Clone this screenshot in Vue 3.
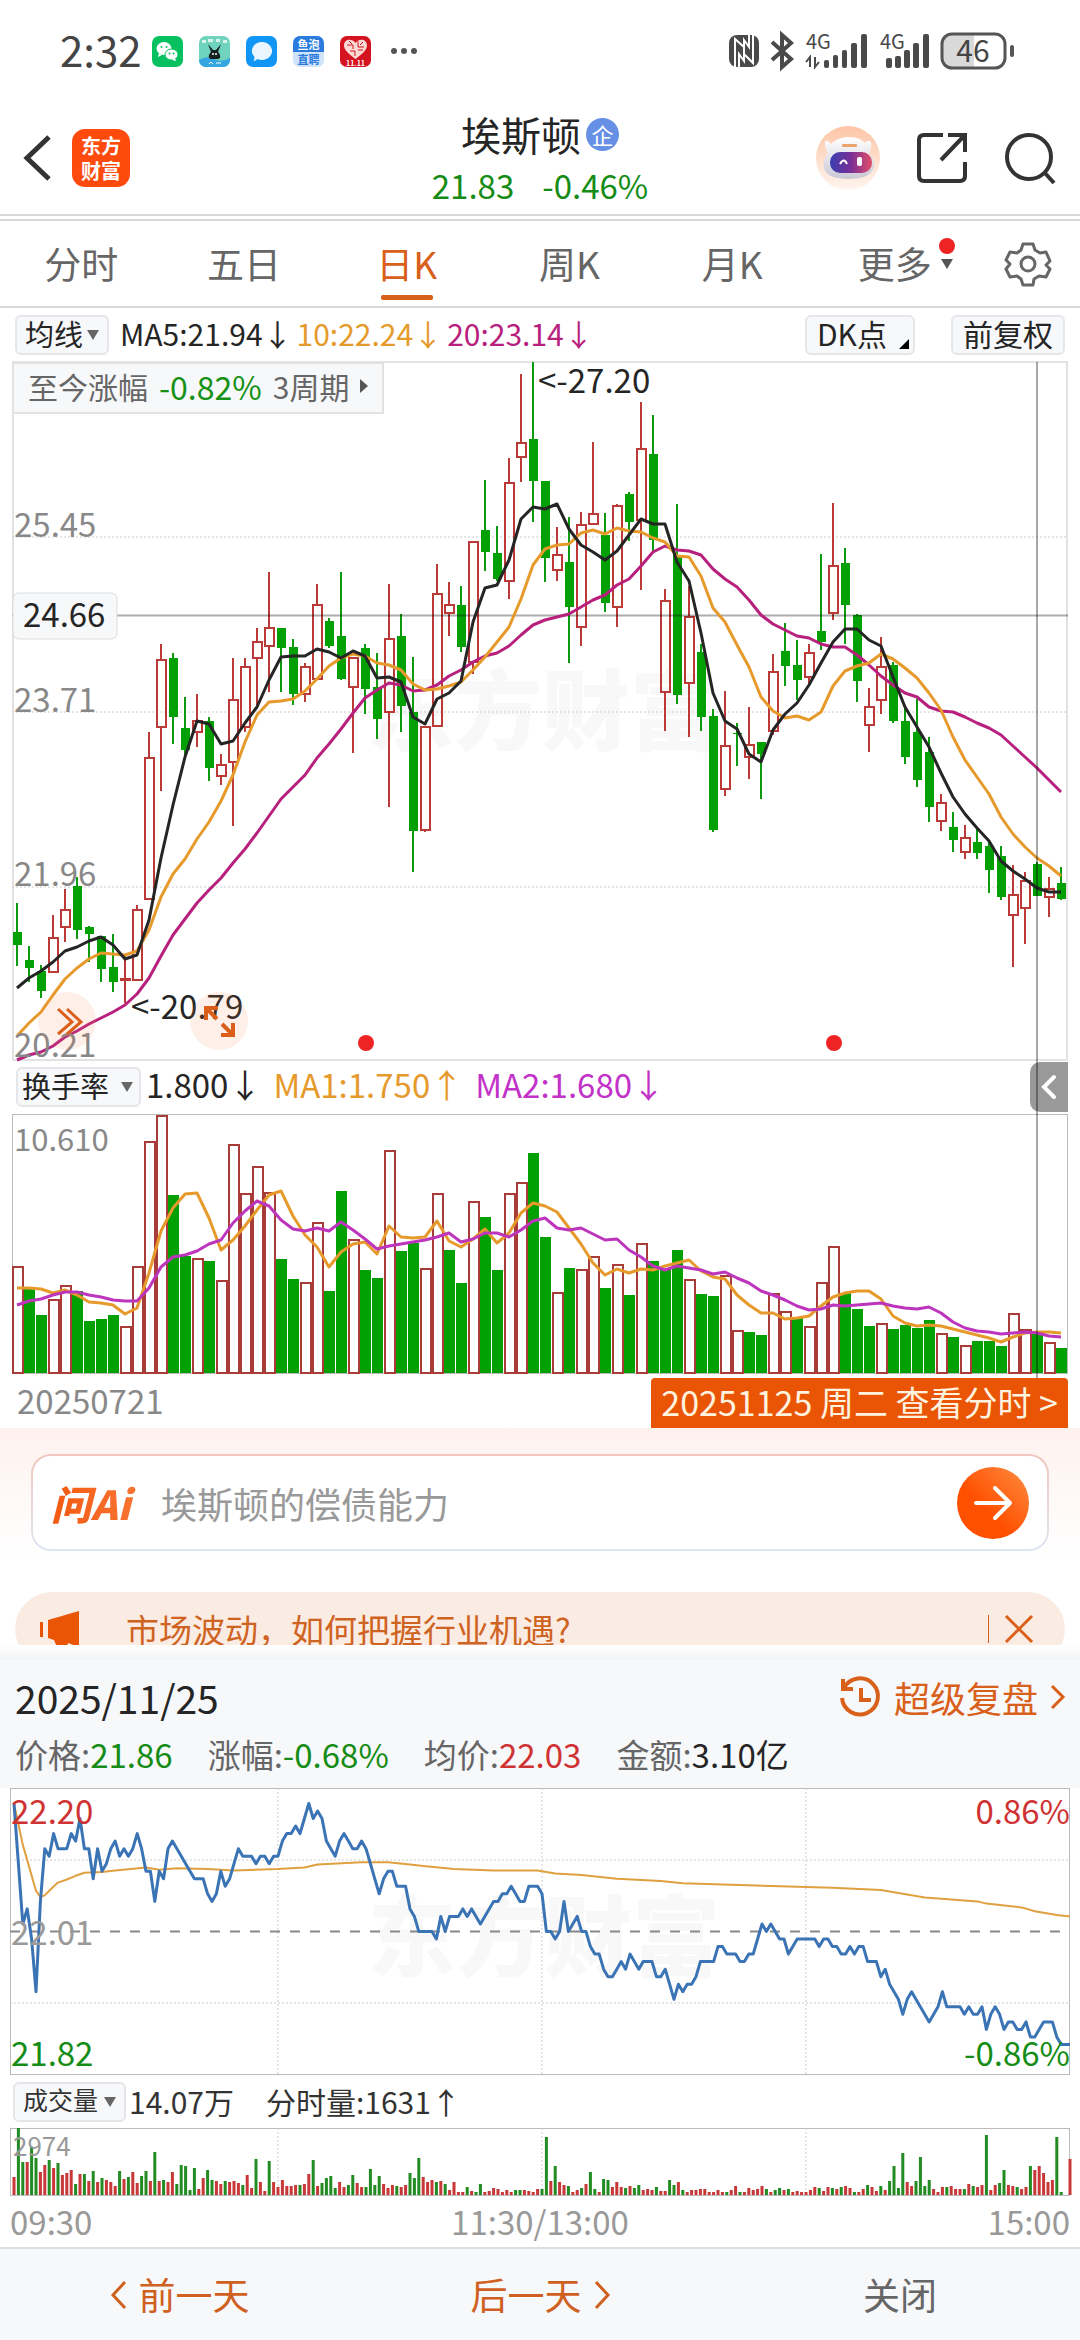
<template>
    <div class="page">
        <header class="status">
            <span class="clock">2:32</span>
            <div class="apps">
                <svg viewBox="0 0 31 31">
                    <rect width="31" height="31" rx="7" fill="#07c160" />
                    <ellipse cx="12" cy="12.500" rx="7.500" ry="6.500" fill="#fff" />
                    <path d="M7 17l-1 4 4-2z" fill="#fff" />
                    <ellipse cx="19.500" cy="18.500" rx="6.500" ry="5.500" fill="#fff" stroke="#07c160" />
                    <path d="M23 22l1 3-4-1z" fill="#fff" />
                    <circle cx="9.500" cy="11" r="1" fill="#07c160" /><circle cx="14.500" cy="11" r="1" fill="#07c160" />
                    <circle cx="17.500" cy="17.500" r="1" fill="#07c160" /><circle cx="21.500" cy="17.500" r="1" fill="#07c160" />
                </svg>
                <svg viewBox="0 0 31 31">
                    <rect width="31" height="31" rx="7" fill="#6fd3bd" />
                    <path d="M0 24q8-5 15-1t16-1v2a7 7 0 0 1-7 7H7a7 7 0 0 1-7-7z" fill="#35a6e0" />
                    <path d="M3 4h4v3H3zM9 3h5v3H9zM17 3h4v3h-4zM24 4h4v3h-4z" fill="#d8f4ea" />
                    <path d="M9 8l5 6h3l5-6-3 8q3 3 2 6l-2 1h-7l-2-1q-1-3 2-6z" fill="#15201f" />
                    <circle cx="14" cy="18" r="1" fill="#fff" /><circle cx="17" cy="18" r="1" fill="#fff" />
                    <path d="M10 28l2-2 2 2M17 27h5" stroke="#fff" stroke-width="1" fill="none" />
                </svg>
                <svg viewBox="0 0 31 31">
                    <rect width="31" height="31" rx="7" fill="#1296f5" />
                    <path d="M15.500 6a10 9 0 1 1-4 17q-2 2-4 2 1-2 1-4A10 9 0 0 1 15.500 6z" fill="#eaf6ff" />
                </svg>
                <svg viewBox="0 0 31 31">
                    <rect width="31" height="31" rx="7" fill="#cfe3fb" />
                    <path d="M0 16V7a7 7 0 0 1 7-7h17a7 7 0 0 1 7 7v9z" fill="#2a7bdc" />
                    <text x="15.500" y="13" font-size="11" font-weight="700" fill="#fff" text-anchor="middle">鱼泡</text>
                    <text x="15.500" y="28" font-size="11" font-weight="700" fill="#2a7bdc" text-anchor="middle">直聘</text>
                </svg>
                <svg viewBox="0 0 31 31">
                    <rect width="31" height="31" rx="7" fill="#d5121f" />
                    <path d="M15.500 23C7 17 4 13 4 9.500 4 3 12 2 15.500 7 19 2 27 3 27 9.500 27 13 24 17 15.500 23z" fill="#fbd9d4" />
                    <path d="M7 9h6v4M18 5v6h6M10 15h5v5M18 14h5M9 5l3 3M20 9l3-3" stroke="#d5121f" fill="none" />
                    <text x="15.500" y="30" font-size="7" font-weight="700" fill="#fff" text-anchor="middle">11.11</text>
                </svg>
            </div>
            <svg class="dots" viewBox="0 0 26 6"><circle cx="3" cy="3" r="3" /><circle cx="13" cy="3" r="3" /><circle cx="23" cy="3" r="3" /></svg>
            <svg class="signals" viewBox="0 0 290 40" aria-label="信号和电量">
                <g fill="#4a4a4a">
                    <rect x="2" y="4" width="30" height="32" rx="8" />
                    <path d="M8 36V8l9 8v14l-5-7v13M26 4v28l-9-9V9l5 7V4" stroke="#fff" stroke-width="2" fill="none" />
                    <path d="M45 11l19 17-9 8V4l9 8-19 17" fill="none" stroke="#4a4a4a" stroke-width="4" />
                    <text x="79" y="18" font-size="20">4G</text>
                    <path d="M83 36V26l-4 5M88 26v10l4-5" fill="none" stroke="#4a4a4a" stroke-width="2" />
                    <rect x="97" y="29" width="5" height="8" rx="2" /><rect x="106" y="24" width="5" height="13" rx="2" /><rect x="115" y="19" width="5" height="18" rx="2" /><rect x="124" y="12" width="6" height="25" rx="2" /><rect x="134" y="3" width="6" height="34" rx="2" />
                    <text x="153" y="18" font-size="20">4G</text>
                    <rect x="159" y="27" width="6" height="10" rx="2" /><rect x="168" y="25" width="6" height="12" rx="2" /><rect x="177" y="19" width="6" height="18" rx="2" /><rect x="186" y="12" width="6" height="25" rx="2" /><rect x="196" y="3" width="6" height="34" rx="2" />
                </g>
                <path d="M247 3h-22q-10 0-10 10v14q0 10 10 10h22z" fill="#d9d9d9" />
                <rect x="215" y="3" width="63" height="34" rx="10" fill="none" stroke="#555" stroke-width="3" />
                <rect x="283" y="14" width="4" height="12" rx="2" fill="#555" />
                <text x="246" y="31" font-size="30" fill="#444" text-anchor="middle">46</text>
            </svg>
        </header>

        <nav class="topbar">
            <div class="side">
                <button class="icon" aria-label="返回">
                    <svg width="28" height="46" viewBox="0 0 28 46"><path d="M25 2L3 23l22 21" fill="none" stroke="#333" stroke-width="5" /></svg>
                </button>
                <svg class="logo" viewBox="0 0 58 58" role="img" aria-label="东方财富">
                    <rect width="58" height="58" rx="13" fill="#ff4a0d" />
                    <text x="29" y="25" font-size="20" font-weight="700" fill="#fff" text-anchor="middle">东方</text>
                    <text x="29" y="50" font-size="20" font-weight="700" fill="#fff" text-anchor="middle">财富</text>
                </svg>
            </div>
            <div class="stock">
                <h1>埃斯顿<span class="tag">企</span></h1>
                <p><span>21.83</span><span>-0.46%</span></p>
            </div>
            <div class="side right">
                <button class="icon" aria-label="智能助手">
                    <svg width="64" height="64" viewBox="0 0 64 64">
                        <defs>
                            <linearGradient id="halo" x1="0" y1="0" x2="0" y2="1"><stop offset="0" stop-color="#fdc5a6" /><stop offset="1" stop-color="#fff5ef" /></linearGradient>
                            <linearGradient id="visor"><stop offset="0" stop-color="#3a3fb0" /><stop offset=".5" stop-color="#7a2f95" /><stop offset="1" stop-color="#e2506a" /></linearGradient>
                            <linearGradient id="shell" x1="0" y1="0" x2="0" y2="1"><stop offset="0" stop-color="#fff" /><stop offset="1" stop-color="#c9c8d6" /></linearGradient>
                        </defs>
                        <circle cx="32" cy="32" r="32" fill="url(#halo)" />
                        <path d="M9 15q3-2 6 3 7-7 18-7t16 6q3-4 6-1 1 6-2 11 6 6 5 14-3 12-26 12-21 0-24-11-2-8 4-15-4-6-3-12z" fill="url(#shell)" />
                        <rect x="26" y="18" width="15" height="3" rx="1" fill="#e9a36b" />
                        <rect x="14" y="26" width="42" height="21" rx="10" fill="url(#visor)" />
                        <path d="M24 38q4-7 7 0" fill="none" stroke="#fff" stroke-width="2" />
                        <rect x="41" y="31" width="5" height="9" rx="2" fill="#fff" />
                    </svg>
                </button>
                <button class="icon" aria-label="分享">
                    <svg width="52" height="52" viewBox="0 0 52 52"><path d="M27 3H8q-5 0-5 5v36q0 5 5 5h36q5 0 5-5V30M25 28L47 5M32 3h17v17" fill="none" stroke="#333" stroke-width="4" /></svg>
                </button>
                <button class="icon" aria-label="搜索">
                    <svg width="52" height="52" viewBox="0 0 52 52"><circle cx="25" cy="25" r="22" fill="none" stroke="#333" stroke-width="4" /><path d="M40 40l10 11" stroke="#333" stroke-width="4" /></svg>
                </button>
            </div>
        </nav>

        <div class="tabs">
            <button v-for="t in tabs" :key="t" :class="{ active: t === current }" @click="current = t">
                <span>{{ t }}<i v-if="t === '更多'" class="more"></i></span>
            </button>
            <button class="gear" aria-label="设置">
                <svg width="46" height="46" viewBox="0 0 46 46" fill="none" stroke="#666" stroke-width="3" stroke-linejoin="round">
                    <path d="M18 3h10l2 6 5 3 6-1 4 9-4 4v0l4 4-4 8-7-1-5 3-1 6H18l-2-6-4-3-7 1-4-8 4-5-4-4 4-8 7 1 4-3z" />
                    <circle cx="23" cy="23" r="7" />
                </svg>
            </button>
        </div>

        <div class="row ma">
            <label class="picker"><select aria-label="均线"><option>均线</option></select><svg viewBox="0 0 12 10"><path d="M0 0h12L6 10z" /></svg></label>
            <span>MA5:21.94↓</span>
            <span class="orange">10:22.24↓</span>
            <span class="magenta">20:23.14↓</span>
            <button class="chip dk">DK点<svg viewBox="0 0 10 10"><path d="M10 0v10H0z" /></svg></button>
            <button class="chip">前复权</button>
        </div>

        <div class="charts">
            <div class="kline">
                <svg class="plot" viewBox="0 0 1056 698">
                    <text x="354" y="381" class="mark">东方财富</text>
                    <rect x="1" y="0" width="1054" height="698" fill="none" stroke="#e2e2e2" stroke-width="2" />
                    <path d="M0 175h1056M0 350h1056M0 525h1056" class="grid" />
                    <g v-for="(c, i) in candles" :key="i">
                        <template v-if="c[4]">
                            <path :d="`M${5 + i * 12} ${c[0]}V${c[1]}M${5 + i * 12} ${c[2]}V${c[3]}`" stroke="#b93a36" stroke-width="2" />
                            <rect :x="i * 12 + 1" :y="c[1]" width="9" :height="c[2] - c[1]" fill="none" stroke="#b93a36" stroke-width="2" />
                        </template>
                        <template v-else>
                            <path :d="`M${5 + i * 12} ${c[0]}V${c[3]}`" stroke="#0c9b0c" stroke-width="2" />
                            <rect :x="i * 12 + 1" :y="c[1]" width="9" :height="c[2] - c[1]" fill="#02a002" />
                        </template>
                    </g>
                    <path d="M0 253.500h1056" stroke="#000" stroke-opacity=".32" stroke-width="2" />
                    <polyline :points="daily(ma20)" class="line" stroke="#b8207e" />
                    <polyline :points="daily(ma10)" class="line" stroke="#e69a2c" />
                    <polyline :points="daily(ma5)" class="line" stroke="#252525" />
                    <g font-size="33" fill="#888">
                        <text x="2" y="175">25.45</text>
                        <text x="2" y="350">23.71</text>
                        <text x="2" y="524">21.96</text>
                        <text x="2" y="695">20.21</text>
                    </g>
                    <rect x="1" y="231" width="104" height="46" rx="6" fill="#f7f8fa" stroke="#ddd" stroke-width="1" />
                    <g font-size="33" fill="#252525">
                        <text x="11" y="265">24.66</text>
                        <text x="526" y="31">&lt;-27.20</text>
                        <text x="119" y="657">&lt;-20.79</text>
                    </g>
                    <circle cx="354" cy="681" r="8" fill="#ee2424" />
                    <circle cx="822" cy="681" r="8" fill="#ee2424" />
                </svg>
                <button class="since">至今涨幅 <b>-0.82%</b> 3周期<svg viewBox="0 0 8 14"><path d="M0 0l8 7-8 7z" /></svg></button>
                <button class="round first" aria-label="快进">
                    <svg viewBox="0 0 58 58"><path d="M20 17l14 13-14 12M29 17l14 13-14 12" /></svg>
                </button>
                <button class="round second" aria-label="全屏">
                    <svg viewBox="0 0 58 58"><path d="M28 16H16v12M16 16l11 11M31 43h12V31M43 43L32 32" /></svg>
                </button>
            </div>

            <div class="row turn">
                <label class="picker"><select aria-label="指标"><option>换手率</option></select><svg viewBox="0 0 12 10"><path d="M0 0h12L6 10z" /></svg></label>
                <span>1.800↓</span>
                <span class="orange">MA1:1.750↑</span>
                <span class="purple">MA2:1.680↓</span>
                <button class="fold" aria-label="收起"><svg viewBox="0 0 14 24"><path d="M12 2L2 12l10 10" /></svg></button>
            </div>

            <svg class="plot" viewBox="0 0 1056 260">
                <rect x="0.500" y="0.500" width="1055" height="259" fill="none" stroke="#bbb" />
                <text x="2" y="37" font-size="31" fill="#888">10.610</text>
                <template v-for="(v, i) in turnover" :key="i">
                    <rect v-if="v > 0" :x="i * 12 + 1" :y="260 - v" width="10" :height="v - 1" fill="#fff" stroke="#a83c38" stroke-width="2" />
                    <rect v-else :x="i * 12" :y="259 + v" width="11" :height="-v" fill="#02a002" />
                </template>
                <polyline :points="daily(turnMa1)" class="line" stroke="#e69a2c" />
                <polyline :points="daily(turnMa2)" class="line" stroke="#bd35bd" />
            </svg>
            <div class="cross"></div>
        </div>

        <div class="dates">
            <span>20250721</span>
            <a href="#day">20251125 周二 查看分时 &gt;</a>
        </div>

        <section class="ai">
            <form @submit.prevent>
                <span class="brand">问Ai</span>
                <input v-model="question" type="text" placeholder="埃斯顿的偿债能力" aria-label="问Ai">
                <button aria-label="发送"><svg viewBox="0 0 72 72"><path d="M19 36h33M38 21l15 15-15 15" /></svg></button>
            </form>
        </section>

        <div class="notice">
            <div class="bar">
                <svg class="horn" viewBox="0 0 40 36"><path d="M0 11h3v15H0zM8 9L39 0v36l-11-4-1 4H17l-3-7-6-2z" /></svg>
                <span>市场波动，如何把握行业机遇?</span>
                <button aria-label="关闭提示"><svg viewBox="0 0 28 28"><path d="M1 1l26 26M27 1L1 27" /></svg></button>
            </div>
        </div>

        <section id="day" class="day">
            <div class="head">
                <h2>2025/11/25</h2>
                <a href="#replay">
                    <svg width="42" height="42" viewBox="0 0 42 42"><path d="M4 12a18 18 0 1 1-2 10M3 3v10h10M21 12v12h10" /></svg>
                    超级复盘
                    <svg width="15" height="26" viewBox="0 0 15 26"><path d="M2 2l11 11L2 24" /></svg>
                </a>
            </div>
            <div class="stats">
                <span>价格:<b class="down">21.86</b></span>
                <span>涨幅:<b class="down">-0.68%</b></span>
                <span>均价:<b class="up">22.03</b></span>
                <span>金额:<b>3.10亿</b></span>
            </div>
            <div class="body">
                <svg class="plot" viewBox="0 0 1060 287">
                    <text x="358" y="181" class="mark">东方财富</text>
                    <rect x="0.500" y="0.500" width="1059" height="286" fill="none" stroke="#bbb" />
                    <path d="M0 72h1060M0 215h1060M268 0v287M532 0v287M796 0v287" class="grid" />
                    <path d="M0 143.500h1060" stroke="#888" stroke-width="2" stroke-dasharray="10 10" />
                    <polyline :points="intraday(average)" class="line thin" stroke="#e0a040" />
                    <polyline :points="intraday(price)" class="line" stroke="#3b74b5" />
                    <g font-size="33">
                        <text x="1" y="36" fill="#cf3232">22.20</text>
                        <text x="1" y="157" fill="#999">22.01</text>
                        <text x="1" y="278" fill="#158c15">21.82</text>
                        <text x="1060" y="36" fill="#cf3232" text-anchor="end">0.86%</text>
                        <text x="1060" y="278" fill="#158c15" text-anchor="end">-0.86%</text>
                    </g>
                </svg>
                <div class="row vol">
                    <label class="picker"><select aria-label="副图指标"><option>成交量</option></select><svg viewBox="0 0 12 10"><path d="M0 0h12L6 10z" /></svg></label>
                    <span>14.07万</span>
                    <span class="minute">分时量:1631↑</span>
                </div>
                <svg class="plot" viewBox="0 0 1060 68">
                    <rect x="0.500" y="0.500" width="1059" height="67" fill="none" stroke="#bbb" />
                    <path d="M268 0v68M532 0v68M796 0v68" class="grid" />
                    <rect v-for="(v, i) in volume" :key="i" :x="2.5 + i * 4.4" :y="67 - Math.abs(v)" width="3" :height="Math.abs(v)" :fill="v > 0 ? '#c93838' : '#228b22'" />
                    <text x="3" y="28" font-size="26" fill="#999">2974</text>
                </svg>
                <div class="times"><span>09:30</span><span>11:30/13:00</span><span>15:00</span></div>
            </div>
        </section>

        <footer class="bottom">
            <button><svg viewBox="0 0 16 28"><path d="M14 1L2 14l12 13" /></svg>前一天</button>
            <button>后一天<svg viewBox="0 0 16 28"><path d="M2 1l12 13L2 27" /></svg></button>
            <button class="close">关闭</button>
        </footer>
    </div>
</template>

<script setup>
    import { ref } from 'vue'

    const tabs = ['分时', '五日', '日K', '周K', '月K', '更多']
    const current = ref('日K')
    const question = ref('')

    // [最高, 实体上沿, 实体下沿, 最低, 是否上涨]
    const candles = [
        [541, 570, 583, 604, 0], [584, 598, 606, 620, 0], [603, 609, 629, 636, 0], [553, 576, 610, 611, 1],
        [527, 548, 565, 580, 1], [515, 524, 568, 577, 0], [564, 565, 572, 600, 0], [574, 574, 607, 620, 0],
        [572, 605, 620, 630, 0], [592, 617, 618, 641, 1], [543, 548, 618, 618, 1], [370, 396, 537, 537, 1],
        [282, 298, 365, 429, 1], [291, 296, 355, 382, 0], [335, 366, 388, 395, 0], [332, 359, 370, 385, 1],
        [355, 359, 406, 419, 0], [392, 403, 414, 423, 1], [296, 338, 400, 464, 1], [296, 305, 365, 370, 1],
        [266, 280, 296, 343, 1], [210, 266, 284, 330, 1], [266, 266, 286, 330, 0], [277, 285, 332, 343, 0],
        [301, 305, 332, 340, 1], [222, 243, 317, 318, 1], [256, 259, 284, 286, 0], [210, 274, 317, 318, 0],
        [295, 296, 325, 391, 1], [282, 286, 327, 352, 0], [291, 325, 357, 377, 0], [222, 277, 350, 445, 1],
        [252, 274, 344, 370, 0], [295, 350, 469, 510, 0], [364, 365, 468, 470, 1], [202, 232, 364, 364, 1],
        [220, 243, 251, 274, 1], [224, 243, 285, 290, 0], [180, 180, 300, 312, 1], [118, 168, 190, 209, 0],
        [164, 191, 217, 219, 0], [96, 121, 219, 237, 1], [12, 81, 95, 120, 1], [0, 77, 119, 160, 0],
        [119, 119, 196, 220, 0], [165, 193, 208, 219, 1], [155, 200, 245, 301, 0], [150, 163, 265, 284, 1],
        [80, 152, 162, 163, 1], [151, 173, 241, 250, 0], [142, 144, 245, 265, 1], [130, 132, 160, 179, 0],
        [40, 87, 158, 228, 1], [53, 92, 178, 189, 0], [227, 239, 330, 369, 1], [142, 193, 333, 342, 0],
        [224, 255, 321, 375, 1], [282, 290, 355, 369, 0], [347, 354, 468, 470, 0], [329, 384, 427, 434, 1],
        [361, 371, 372, 404, 0], [345, 383, 395, 417, 1], [380, 380, 392, 437, 0], [292, 310, 369, 373, 1],
        [261, 289, 304, 324, 0], [278, 303, 318, 338, 0], [282, 291, 315, 321, 1], [192, 269, 280, 288, 0],
        [141, 204, 251, 258, 1], [186, 201, 243, 282, 0], [252, 253, 319, 340, 0], [326, 345, 363, 390, 1],
        [275, 305, 338, 352, 1], [300, 303, 359, 361, 0], [343, 359, 395, 402, 0], [337, 370, 418, 425, 0],
        [375, 390, 445, 460, 0], [432, 441, 459, 469, 1], [450, 465, 478, 490, 0], [463, 476, 490, 497, 1],
        [466, 480, 491, 497, 0], [479, 484, 508, 531, 0], [484, 494, 535, 538, 0], [503, 533, 553, 605, 1],
        [510, 519, 546, 582, 1], [500, 502, 534, 534, 0], [515, 527, 535, 555, 1], [505, 521, 537, 538, 0]
    ]

    const ma5 = [
        626, 616, 609, 600, 589, 585, 579, 575, 583, 597, 593, 558, 496, 443, 395, 359, 362, 382, 379, 361, 345, 318,
        295, 294, 294, 287, 290, 296, 289, 294, 316, 315, 320, 355, 362, 337, 331, 319, 260, 226, 223, 198, 157, 145,
        147, 142, 167, 183, 190, 198, 189, 173, 157, 162, 162, 200, 219, 271, 331, 359, 367, 392, 400, 368, 352, 341,
        323, 301, 280, 267, 267, 278, 284, 315, 345, 365, 385, 411, 435, 452, 466, 479, 499, 509, 517, 526, 530, 530
    ]
    const ma10 = [
        674, 661, 650, 633, 617, 606, 597, 591, 592, 593, 589, 568, 535, 512, 497, 477, 460, 439, 413, 380, 353, 340,
        339, 337, 329, 317, 304, 296, 292, 294, 301, 303, 308, 322, 328, 327, 324, 320, 308, 295, 280, 265, 237, 203,
        187, 183, 182, 171, 168, 172, 166, 169, 170, 176, 180, 194, 195, 214, 246, 260, 283, 305, 335, 349, 356, 354,
        358, 350, 324, 309, 304, 301, 292, 297, 306, 316, 331, 348, 375, 398, 415, 432, 455, 472, 485, 496, 504, 514
    ]
    const ma20 = [
        698, 693, 690, 684, 675, 669, 662, 656, 650, 643, 632, 616, 594, 573, 557, 541, 528, 516, 501, 487, 471, 454,
        437, 425, 413, 396, 382, 367, 351, 336, 328, 321, 323, 329, 328, 323, 314, 308, 300, 294, 291, 284, 273, 263,
        258, 255, 252, 245, 238, 233, 223, 217, 204, 190, 184, 188, 189, 193, 207, 217, 225, 238, 253, 262, 268, 274,
        276, 282, 285, 285, 293, 303, 314, 323, 331, 335, 345, 349, 350, 355, 361, 366, 373, 384, 395, 406, 418, 430
    ]

    // 正数为红柱，负数为绿柱
    const turnover = [
        107, -86, -58, 74, 88, -82, -52, -54, -58, 47, 107, 232, 258, -178, -117, 115, -112, 93, 229, 180, 207, 181,
        -114, -94, 91, 151, -82, -182, 134, -103, -95, 223, -122, -130, 105, 180, -123, -90, 172, -156, -103, 180, 191, -220,
        -136, 81, -105, 104, 117, -85, 109, -78, 130, -112, -104, -123, 94, -79, -77, 98, 43, -41, -38, 80, 62, -55,
        47, 91, 127, -80, -64, -47, 50, -44, -48, -45, -53, 40, -36, 28, -32, -32, -27, 60, 44, -41, 31, -25
    ]
    const turnMa1 = [
        174, 174, 175, 179, 176, 181, 188, 189, 191, 200, 194, 159, 117, 94, 80, 79, 104, 136, 126, 112, 96, 81,
        77, 102, 121, 133, 153, 138, 130, 128, 140, 112, 123, 124, 123, 107, 127, 133, 125, 115, 129, 119, 99, 89,
        92, 98, 114, 130, 149, 161, 155, 159, 155, 156, 152, 149, 146, 157, 163, 165, 181, 191, 199, 199, 205, 204,
        202, 192, 183, 179, 177, 177, 185, 202, 209, 212, 211, 212, 215, 218, 221, 224, 228, 223, 219, 218, 218, 219
    ]
    const turnMa2 = [
        191, 187, 185, 181, 178, 178, 181, 183, 186, 187, 187, 174, 153, 143, 141, 137, 130, 126, 109, 97, 87, 92,
        106, 115, 117, 114, 117, 108, 116, 125, 135, 132, 130, 128, 126, 123, 119, 128, 125, 119, 119, 123, 116, 107,
        104, 114, 116, 114, 120, 126, 125, 136, 143, 152, 156, 152, 154, 156, 160, 158, 164, 169, 177, 181, 186, 192,
        196, 195, 191, 192, 191, 190, 189, 192, 194, 195, 193, 199, 208, 214, 217, 218, 220, 219, 218, 219, 222, 223
    ]

    // 分时: [分钟, 相对昨收的分数]
    const price = [
        [0, 17], [1, 9], [2, 1], [3, 3], [4, -1], [5, -8], [6, 4], [7, 11], [8, 10], [9, 13], [10, 11], [12, 11],
        [13, 13], [14, 12], [15, 15], [16, 11], [17, 11], [18, 7], [19, 11], [20, 8], [21, 9], [22, 11], [23, 12],
        [24, 10], [25, 11], [26, 10], [27, 11], [28, 13], [29, 11], [30, 8], [31, 8], [32, 4], [33, 8], [34, 7],
        [35, 11], [36, 12], [41, 7], [43, 7], [44, 5], [45, 4], [46, 5], [47, 8], [48, 6], [49, 7], [50, 9],
        [51, 11], [52, 10], [54, 10], [55, 9], [56, 10], [57, 10], [58, 9], [59, 10], [60, 10], [61, 12], [62, 13],
        [63, 13], [64, 14], [65, 13], [66, 15], [67, 17], [68, 15], [69, 16], [70, 15], [71, 12], [72, 11], [73, 10],
        [74, 12], [75, 13], [76, 12], [77, 11], [78, 11], [79, 12], [80, 11], [81, 9], [82, 7], [83, 5], [84, 7],
        [85, 8], [86, 8], [87, 6], [89, 6], [90, 3], [91, 2], [92, 0], [95, 0], [96, -1], [97, 2], [98, 0], [99, 2],
        [101, 2], [102, 3], [103, 2], [104, 3], [105, 2], [106, 1], [107, 2], [109, 4], [110, 4], [111, 5], [112, 5],
        [113, 6], [114, 5], [115, 4], [116, 4], [117, 6], [119, 6], [120, 5], [121, 0], [122, 0], [123, -1], [124, 0],
        [125, 4], [126, 0], [127, 1], [128, 2], [129, 0], [130, 0], [131, -2], [132, -3], [133, -3], [134, -5],
        [135, -6], [136, -6], [137, -5], [138, -4], [139, -5], [140, -3], [142, -5], [143, -4], [145, -4], [146, -6],
        [147, -6], [148, -5], [149, -7], [150, -9], [151, -7], [152, -8], [153, -7], [154, -7], [155, -6], [156, -4],
        [159, -4], [160, -2], [161, -2], [162, -3], [164, -3], [165, -4], [166, -4], [167, -3], [168, -3], [169, -1],
        [170, 1], [171, 0], [172, 1], [173, 0], [174, -1], [175, -1], [176, -3], [178, -1], [182, -1], [183, -2],
        [184, -1], [185, -1], [186, -2], [187, -2], [188, -3], [189, -3], [190, -2], [191, -3], [192, -2], [193, -2],
        [194, -4], [196, -4], [197, -6], [198, -5], [199, -7], [201, -9], [202, -11], [203, -9], [204, -8], [208, -12],
        [210, -10], [211, -8], [212, -10], [215, -10], [216, -11], [217, -10], [218, -11], [219, -11], [220, -10],
        [221, -13], [222, -11], [223, -10], [224, -11], [225, -13], [226, -12], [227, -12], [228, -13], [229, -13],
        [230, -12], [231, -14], [232, -14], [234, -12], [236, -12], [237, -14], [238, -15], [240, -15]
    ]
    const average = [
        [0, 17], [2, 11.5], [5, 5.4], [6, 4.6], [7, 4.8], [8, 5.4], [10, 6.5], [12, 6.9], [14, 7.4], [16, 7.8],
        [20, 7.9], [23, 8.1], [30, 8.5], [33, 8.2], [37, 8.4], [44, 8.3], [50, 8.1], [60, 8.3], [66, 8.5], [69, 8.9],
        [79, 9.2], [85, 9.2], [90, 8.9], [93, 8.7], [100, 8.3], [109, 8.1], [119, 8.1], [123, 7.7], [129, 7.5],
        [137, 7], [147, 6.7], [152, 6.4], [163, 6.2], [174, 6], [186, 5.8], [197, 5.5], [202, 5], [207, 4.5],
        [219, 4], [221, 3.7], [229, 3.2], [232, 2.7], [235, 2.4], [237, 2.2], [240, 2]
    ]
    const volume = [
        18, -67, -33, 33, -48, -37, 23, 30, -35, 27, -32, 20, 22, 25, -11, 21, -21, 14, -24, 13, -17, 15, 13, 9, -24,
        16, -18, 23, 12, -19, -24, 14, -43, 14, -15, 13, 23, -11, -30, -29, -5, -27, 6, 17, -25, -15, 14, 11, -14, 13,
        14, 12, -10, 20, 7, -36, 13, 4, -34, 13, 8, 15, 9, 9, 10, -10, 11, 21, -35, 9, -12, -17, -19, -7, 13, 8, -10,
        -20, 12, 8, -8, -26, -10, -19, 11, 7, 10, -9, 8, 10, -22, -17, -37, 18, 13, 15, -13, 14, -11, 5, 13, 3, 3, -8,
        4, -3, -11, 3, 4, 7, 6, 3, 5, 3, -5, -5, 5, 4, 3, 6, -6, -58, 14, -29, 13, 10, -9, 3, 5, -7, 11, -23, -6, 3,
        -16, -15, 8, 13, 8, -7, 9, -7, -10, 5, 6, 5, -8, 4, 4, -15, -10, 13, -5, 3, 5, 5, 6, 6, 3, 3, 5, 3, -3, 5, 9,
        -3, 3, 7, 5, 6, 9, -6, 3, -5, -7, 5, -6, 3, 4, 3, 3, 5, 8, -7, 4, 8, -7, 6, -8, 9, 7, -3, 3, 6, -10, 8, 4, -9,
        5, -14, -29, -7, -42, 13, 9, -14, -38, -9, -15, 6, 3, 8, -8, 9, 6, 6, -6, 11, -9, 8, 10, -60, 5, 10, -12, -25,
        10, 9, -8, 6, 8, -29, 25, 29, 22, 13, 15, -58, -3, 0, 36
    ]

    function daily(list) {
        return list.map((y, i) => `${5 + i * 12},${y}`).join(' ')
    }

    function intraday(list) {
        return list.map(([m, c]) => `${(4 + m * 4.4).toFixed(1)},${(143.5 - c * 7.53).toFixed(1)}`).join(' ')
    }
</script>

<style>
body {
    margin: 0;
    background: #fff;
}
</style>

<style scoped>
.page {
    color: #252525;
    font-family: "Noto Sans CJK SC", "Noto Sans", sans-serif;
    line-height: 1;
}

.page * {
    box-sizing: border-box;
}

svg {
    display: block;
    flex: none;
    overflow: visible;
}

button,
input,
select {
    padding: 0;
    border: 0;
    background: none;
    color: inherit;
    font: inherit;
}

a {
    color: inherit;
    text-decoration: none;
}

b {
    font-weight: 400;
}

.status {
    display: flex;
    align-items: center;
    height: 102px;
    padding: 0 63px 0 60px;
}

.clock {
    width: 92px;
    padding-bottom: 4px;
    color: #444;
    font-size: 42px;
}

.apps {
    display: flex;
    gap: 16px;
}

.apps svg {
    width: 31px;
}

.dots {
    width: 26px;
    margin-left: 20px;
    fill: #555;
}

.signals {
    width: 290px;
    margin-left: auto;
}

.topbar {
    display: flex;
    justify-content: space-between;
    height: 114px;
    border-bottom: 2px solid #d8d8d8;
}

.side {
    display: flex;
    flex: 1;
    align-items: center;
    gap: 20px;
    padding: 0 24px;
}

.right {
    justify-content: flex-end;
    gap: 36px;
}

.logo {
    width: 58px;
}

.stock {
    display: flex;
    flex-direction: column;
    align-items: center;
    gap: 15px;
    padding-top: 12px;
}

.stock h1 {
    display: flex;
    align-items: center;
    gap: 5px;
    margin: 0;
    font-size: 40px;
    font-weight: 400;
}

.tag {
    width: 33px;
    border-radius: 50%;
    background: #6690e6;
    color: #fff;
    font-size: 22px;
    line-height: 33px;
    text-align: center;
}

.stock p {
    display: flex;
    gap: 28px;
    margin: 0;
    color: #158c15;
    font-size: 33px;
}

.tabs {
    display: flex;
    height: 89px;
    margin-top: 3px;
    border-top: 2px solid #d8d8d8;
    border-bottom: 2px solid #d8d8d8;
    color: #666;
    font-size: 37px;
}

.tabs button {
    position: relative;
    flex: 163;
}

.tabs .active {
    color: #d9601a;
}

.tabs .active::after {
    position: absolute;
    bottom: 6px;
    left: 50%;
    width: 52px;
    height: 5px;
    margin-left: -26px;
    border-radius: 2px;
    background: #d9601a;
    content: "";
}

.tabs span {
    position: relative;
}

.more::before {
    position: absolute;
    top: 2px;
    right: -23px;
    width: 16px;
    height: 16px;
    border-radius: 50%;
    background: #ee2424;
    content: "";
}

.more::after {
    position: absolute;
    top: 23px;
    right: -21px;
    border: 6px solid transparent;
    border-top: 10px solid #555;
    border-bottom: 0;
    content: "";
}

.tabs .gear {
    display: flex;
    flex: 104;
    align-items: center;
    justify-content: center;
}

.row {
    display: flex;
    align-items: center;
    height: 54px;
}

.row > span {
    padding-bottom: 5px;
}

.ma {
    padding: 0 15px;
    font-size: 30px;
}

.picker,
.chip {
    display: flex;
    align-items: center;
    height: 40px;
    border: 2px solid #e4e6e9;
    border-radius: 6px;
    background: #f7f8fa;
}

.picker {
    gap: 3px;
    padding: 0 8px;
    font-size: 29px;
}

.picker select {
    height: 36px;
    padding-bottom: 4px;
    appearance: none;
}

.picker svg {
    width: 12px;
    fill: #666;
}

.ma .picker {
    margin-right: 11px;
}

.ma > span {
    margin-right: 4px;
}

.chip {
    padding: 0 10px 4px;
}

.ma .dk {
    gap: 12px;
    margin-right: 36px;
    margin-left: auto;
    padding-right: 4px;
}

.dk svg {
    align-self: flex-end;
    width: 10px;
}

.orange {
    color: #e69a2c;
}

.magenta {
    color: #b8207e;
}

.purple {
    color: #c232c8;
}

.charts {
    position: relative;
    padding: 0 12px 4px;
}

.plot {
    width: 100%;
    height: auto;
}

.mark {
    fill: #f8f8f8;
    font-size: 88px;
    font-weight: 900;
}

.grid {
    fill: none;
    stroke: #ccc;
    stroke-dasharray: 2 2;
}

.line {
    fill: none;
    stroke-width: 3;
    stroke-linejoin: round;
}

.thin {
    stroke-width: 2;
}

.cross {
    position: absolute;
    top: 0;
    right: 42px;
    bottom: 0;
    width: 2px;
    background: rgba(0, 0, 0, .34);
}

.kline {
    position: relative;
}

.since {
    position: absolute;
    top: 0;
    left: 0;
    display: flex;
    align-items: center;
    gap: 11px;
    height: 52px;
    padding: 0 14px 4px;
    border: 2px solid #e2e2e2;
    background: #f7f8fa;
    color: #666;
    font-size: 30px;
}

.since b {
    color: #159215;
    font-size: 32px;
}

.since svg {
    width: 8px;
    fill: #555;
}

.round {
    position: absolute;
    bottom: 10px;
    width: 58px;
    height: 58px;
    border-radius: 50%;
    background: rgba(250, 130, 70, .12);
}

.round path {
    fill: none;
    stroke: #db5f1b;
    stroke-width: 4;
}

.first {
    left: 26px;
}

.first path {
    stroke-width: 3;
}

.second {
    left: 178px;
}

.turn {
    padding-left: 4px;
    font-size: 33px;
}

.turn .picker {
    gap: 11px;
    margin-right: 5px;
    padding: 0 6px 0 4px;
}

.turn > span {
    margin-right: 12px;
}

.turn .fold {
    display: flex;
    align-items: center;
    justify-content: center;
    width: 38px;
    height: 50px;
    margin-left: auto;
    border-radius: 10px 0 0 10px;
    background: #999;
}

.fold svg {
    width: 14px;
    fill: none;
    stroke: #fff;
    stroke-width: 4;
    stroke-linecap: round;
}

.dates {
    display: flex;
    align-items: center;
    justify-content: space-between;
    height: 50px;
    padding: 0 12px 0 17px;
    color: #888;
    font-size: 33px;
}

.dates span {
    padding-bottom: 6px;
}

.dates a {
    height: 50px;
    padding: 0 10px;
    border-radius: 4px 4px 0 0;
    background: #e95504;
    color: #fff3e0;
    font-size: 34px;
    line-height: 48px;
}

.ai {
    padding: 26px 31px 41px;
    background: linear-gradient(#fef2ee, #fff 80%);
}

.ai form {
    display: flex;
    align-items: center;
    height: 97px;
    padding: 0 18px;
    border: 2px solid transparent;
    border-radius: 20px;
    background: linear-gradient(#fff, #fff) padding-box, linear-gradient(#f3c6be, #dfe6f3) border-box;
}

.brand {
    width: 110px;
    background: linear-gradient(90deg, #f25a12, #fb7b3c);
    background-clip: text;
    color: transparent;
    font-size: 40px;
    font-style: italic;
    font-weight: 900;
    line-height: 60px;
}

.ai input {
    flex: 1;
    min-width: 0;
    outline: 0;
    font-size: 36px;
}

.ai input::placeholder {
    color: #999;
    opacity: 1;
}

.ai button {
    width: 72px;
    height: 72px;
    border-radius: 50%;
    background: linear-gradient(45deg, #ff5000 40%, #ff8d42);
}

.ai button path {
    fill: none;
    stroke: #fff;
    stroke-width: 4;
    stroke-linecap: round;
    stroke-linejoin: round;
}

.notice {
    height: 53px;
    padding: 0 15px;
    overflow: hidden;
}

.bar {
    display: flex;
    align-items: center;
    height: 74px;
    padding: 0 32px 0 25px;
    border-radius: 37px;
    background: #fbece3;
    color: #cf6322;
    font-size: 33px;
}

.horn {
    width: 40px;
    margin-right: 46px;
    fill: #e95504;
}

.bar button {
    margin-left: auto;
    padding-left: 16px;
    border-left: 1px solid #d9601a;
}

.bar button svg {
    width: 28px;
    fill: none;
    stroke: #d9601a;
    stroke-width: 3;
}

.day {
    background: #f7f8fa;
}

.day::before {
    display: block;
    height: 15px;
    background: linear-gradient(#fff, #f2f3f4);
    content: "";
}

.head {
    display: flex;
    align-items: center;
    justify-content: space-between;
    height: 74px;
    padding: 0 15px;
}

.head h2 {
    margin: 0;
    font-size: 39px;
    font-weight: 400;
}

.head a {
    display: flex;
    align-items: center;
    gap: 12px;
    color: #d9601a;
    font-size: 36px;
}

.head path {
    fill: none;
    stroke: #d9601a;
    stroke-width: 3;
}

.head svg:first-child path {
    stroke-width: 4;
}

.stats {
    display: flex;
    align-items: center;
    gap: 35px;
    height: 54px;
    padding: 0 15px 14px;
    color: #666;
    font-size: 33px;
}

.stats b {
    color: #252525;
}

.stats .down {
    color: #158c15;
}

.stats .up {
    color: #cf3232;
}

.body {
    padding: 0 10px;
    background: #fff;
}

.vol {
    height: 53px;
    padding-left: 3px;
    color: #333;
    font-size: 30px;
}

.vol > span {
    padding-bottom: 2px;
}

.vol .picker {
    gap: 5px;
    margin-right: 3px;
    font-size: 25px;
}

.minute {
    margin-left: 32px;
}

.times {
    display: flex;
    align-items: center;
    justify-content: space-between;
    height: 51px;
    color: #999;
    font-size: 33px;
}

.bottom {
    display: flex;
    height: 93px;
    border-top: 2px solid #ddd;
    background: #f7f8fa;
    color: #d0601f;
    font-size: 37px;
}

.bottom button {
    display: flex;
    flex: 1;
    align-items: center;
    justify-content: center;
    gap: 12px;
}

.bottom svg {
    width: 16px;
    fill: none;
    stroke: #d0601f;
    stroke-width: 3;
}

.bottom .close {
    color: #666;
}
</style>
